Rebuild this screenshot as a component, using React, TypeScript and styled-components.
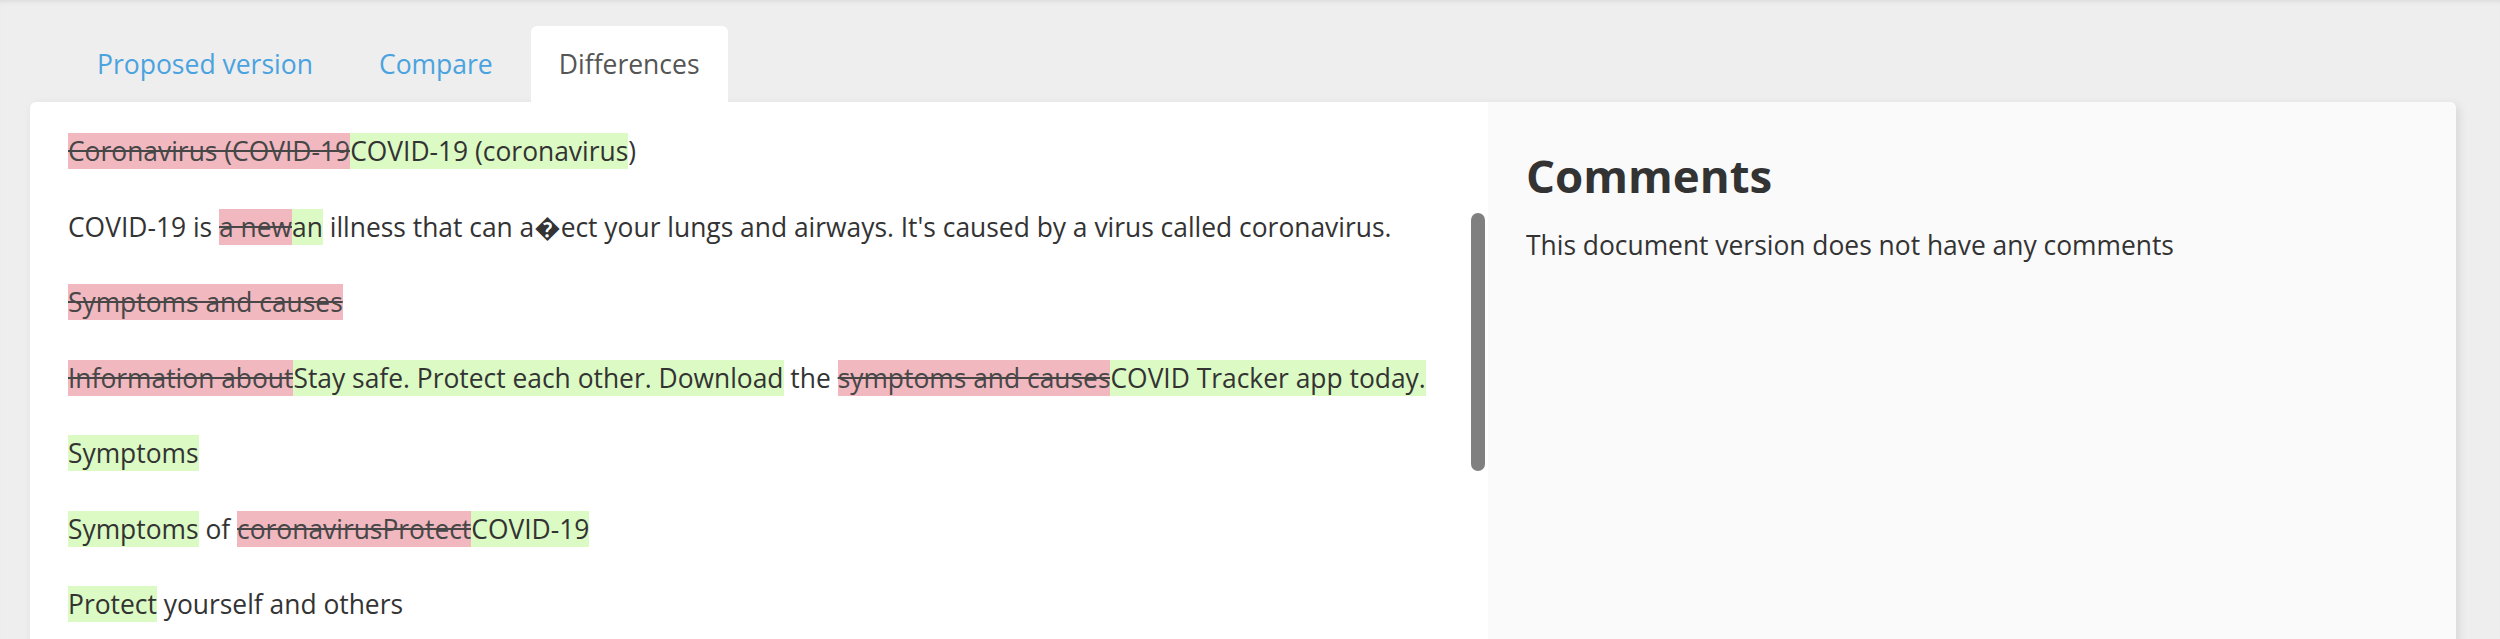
import React from "react";
import styled, { createGlobalStyle } from "styled-components";

const GlobalStyle = createGlobalStyle`
  html, body {
    margin: 0;
    padding: 0;
    background: #eeeeee;
    overflow: hidden;
  }
  body {
    font-family: "Open Sans", "Liberation Sans", sans-serif;
    color: #333333;
  }
`;

type Chunk = { text: string; kind?: "del" | "ins" };

const DIFF_LINES: Chunk[][] = [
  [
    { text: "Coronavirus (COVID-19", kind: "del" },
    { text: "COVID-19 (coronavirus", kind: "ins" },
    { text: ")" },
  ],
  [
    { text: "COVID-19 is " },
    { text: "a new", kind: "del" },
    { text: "an", kind: "ins" },
    {
      text: " illness that can a\uFFFDect your lungs and airways. It's caused by a virus called coronavirus.",
    },
  ],
  [{ text: "Symptoms and causes", kind: "del" }],
  [
    { text: "Information about", kind: "del" },
    { text: "Stay safe. Protect each other. Download", kind: "ins" },
    { text: " the " },
    { text: "symptoms and causes", kind: "del" },
    { text: "COVID Tracker app today.", kind: "ins" },
  ],
  [{ text: "Symptoms", kind: "ins" }],
  [
    { text: "Symptoms", kind: "ins" },
    { text: " of " },
    { text: "coronavirusProtect", kind: "del" },
    { text: "COVID-19", kind: "ins" },
  ],
  [
    { text: "Protect", kind: "ins" },
    { text: " yourself and others" },
  ],
];

export default function App() {
  return (
    <>
      <GlobalStyle />
      <Page>
        <Tabs>
          <Tab>Proposed version</Tab>
          <Tab>Compare</Tab>
          <Tab $active>Differences</Tab>
        </Tabs>
        <Card>
          <DiffPane>
            {DIFF_LINES.map((line, i) => (
              <Para key={i}>
                {line.map((c, j) =>
                  c.kind === "del" ? (
                    <Del key={j}>{c.text}</Del>
                  ) : c.kind === "ins" ? (
                    <Ins key={j}>{c.text}</Ins>
                  ) : (
                    <React.Fragment key={j}>{c.text}</React.Fragment>
                  )
                )}
              </Para>
            ))}
            <ScrollThumb />
          </DiffPane>
          <CommentsPane>
            <Heading>Comments</Heading>
            <Empty>This document version does not have any comments</Empty>
          </CommentsPane>
        </Card>
      </Page>
    </>
  );
}

const Page = styled.div`
  min-height: 639px;
  padding: 26px 44px 0 30px;
  box-sizing: border-box;
  box-shadow: inset 0 5px 6px -5px rgba(0, 0, 0, 0.12);
`;

const Tabs = styled.nav`
  display: flex;
  gap: 10px;
  padding-left: 39px;
`;

const Tab = styled.a<{ $active?: boolean }>`
  display: block;
  height: 76px;
  line-height: 76px;
  padding: 0 28px;
  font-size: 26.5px;
  border-radius: 6px 6px 0 0;
  color: ${(p) => (p.$active ? "#555555" : "#4aa3df")};
  background: ${(p) => (p.$active ? "#ffffff" : "transparent")};
  cursor: pointer;
`;

const Card = styled.section`
  display: grid;
  grid-template-columns: 1458px 1fr;
  height: 640px;
  background: #ffffff;
  border-radius: 6px;
  overflow: hidden;
  box-shadow: 3px 3px 10px rgba(0, 0, 0, 0.1);
`;

const DiffPane = styled.div`
  position: relative;
  padding: 30px 0 0 38px;
  font-size: 26.4px;
`;

const Para = styled.p`
  margin: 0 0 36.5px;
  line-height: 39px;
  white-space: nowrap;
`;

const Del = styled.del`
  background: #f1b8c0;
  color: #474747;
  text-decoration: line-through;
`;

const Ins = styled.ins`
  background: #dcfac4;
  text-decoration: none;
`;

const ScrollThumb = styled.div`
  position: absolute;
  left: 1441px;
  top: 111px;
  width: 14px;
  height: 258px;
  border-radius: 7px;
  background: #808080;
`;

const CommentsPane = styled.aside`
  background: #fafafa;
  padding: 42px 38px;
`;

const Heading = styled.h2`
  margin: 0;
  font-size: 45.6px;
  font-weight: 700;
  line-height: normal;
  color: #333333;
`;

const Empty = styled.p`
  margin: 21px 0 0;
  font-size: 26.4px;
  line-height: normal;
  color: #333333;
`;
